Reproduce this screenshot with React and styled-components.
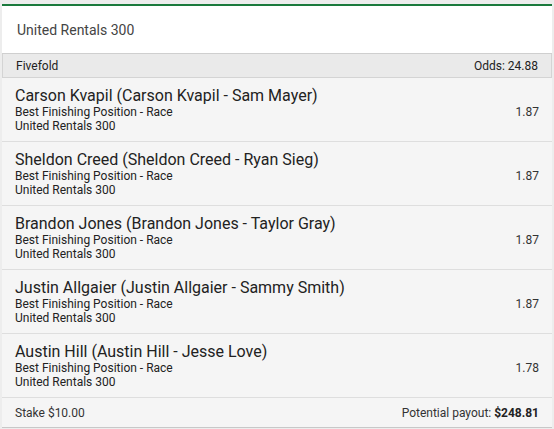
import React from 'react';
import styled, { createGlobalStyle } from 'styled-components';

const GlobalStyle = createGlobalStyle`
    html, body {
        margin: 0;
        padding: 0;
        background: #ededed;
        font-family: Roboto, "Liberation Sans", Arial, sans-serif;
    }
`;

const Page = styled.div`
    padding: 4px 2px 0 2px;
`;

const Card = styled.div`
    border-top: 2px solid #1b7a3d;
    background: #f5f5f5;
    border-bottom: 1px solid #c8c8c8;
`;

const Header = styled.div`
    background: #fff;
    height: 47px;
    display: flex;
    align-items: center;
    padding: 0 15px;
    font-size: 14px;
    color: #444;
    border-bottom: 1px solid #cfcfcf;
`;

const TypeBar = styled.div`
    display: flex;
    justify-content: space-between;
    align-items: center;
    height: 23px;
    padding: 0 13px 0 13px;
    background: #eaeaea;
    font-size: 12px;
    color: #222;
    border-bottom: 1px solid #d4d4d4;
    border-left: 1px solid #d4d4d4;
    border-right: 1px solid #d4d4d4;
`;

const Leg = styled.div`
    display: flex;
    justify-content: space-between;
    align-items: center;
    padding: 8px 13px 8px 13px;
    border-bottom: 1px solid #dedede;
`;

const LegInfo = styled.div`
    display: flex;
    flex-direction: column;
`;

const LegTitle = styled.div`
    font-size: 16px;
    line-height: 19px;
    color: #222;
`;

const LegSub = styled.div`
    font-size: 12px;
    line-height: 14px;
    color: #222;
`;

const LegOdds = styled.div`
    font-size: 12px;
    color: #333;
    padding-top: 4px;
`;

const Footer = styled.div`
    display: flex;
    justify-content: space-between;
    align-items: center;
    height: 29px;
    padding: 0 13px 0 13px;
    font-size: 12px;
    color: #333;
`;

const Bold = styled.b`
    font-weight: 700;
    color: #222;
`;

const legs = [
    { name: 'Carson Kvapil (Carson Kvapil - Sam Mayer)', odds: '1.87' },
    { name: 'Sheldon Creed (Sheldon Creed - Ryan Sieg)', odds: '1.87' },
    { name: 'Brandon Jones (Brandon Jones - Taylor Gray)', odds: '1.87' },
    { name: 'Justin Allgaier (Justin Allgaier - Sammy Smith)', odds: '1.87' },
    { name: 'Austin Hill (Austin Hill - Jesse Love)', odds: '1.78' },
];

function App() {
    return (
        <Page>
            <GlobalStyle />
            <Card>
                <Header>United Rentals 300</Header>
                <TypeBar>
                    <span>Fivefold</span>
                    <span>Odds: 24.88</span>
                </TypeBar>
                {legs.map((leg) => (
                    <Leg key={leg.name}>
                        <LegInfo>
                            <LegTitle>{leg.name}</LegTitle>
                            <LegSub>Best Finishing Position - Race</LegSub>
                            <LegSub>United Rentals 300</LegSub>
                        </LegInfo>
                        <LegOdds>{leg.odds}</LegOdds>
                    </Leg>
                ))}
                <Footer>
                    <span>Stake $10.00</span>
                    <span>Potential payout: <Bold>$248.81</Bold></span>
                </Footer>
            </Card>
        </Page>
    );
}

export default App;
